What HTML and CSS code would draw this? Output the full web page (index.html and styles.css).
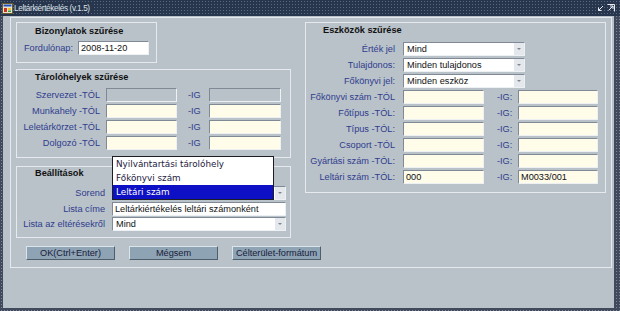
FILE: index.html
```html
<!DOCTYPE html>
<html lang="hu">
<head>
    <meta charset="UTF-8">
    <title>Leltárkiértékelés</title>
    <link rel="stylesheet" href="styles.css">
</head>
<body>
    <div class="ablak">
        <div class="cimsor">
            <svg class="ikon" width="11" height="11" viewBox="0 0 11 11">
                <rect x="0.5" y="0.5" width="10" height="10" fill="#e8e4d0" stroke="#6a5a30"/>
                <rect x="1.5" y="1.5" width="8" height="2" fill="#2050c0"/>
                <rect x="2" y="5" width="3" height="4" fill="#d03020"/>
                <rect x="6" y="5" width="3" height="2" fill="#e8c020"/>
                <rect x="6" y="7.5" width="3" height="1.5" fill="#30a040"/>
            </svg>
            <span class="cim">Leltárkiértékelés (v.1.5)</span>
            <span class="cim-gombok">
                <svg width="7" height="7" viewBox="0 0 7 7">
                    <path d="M6 1 L1.5 5.5 M1.5 2.5 V5.5 H4.5" stroke="#e8ecf2" stroke-width="1" fill="none"/>
                </svg>
                <svg width="8" height="8" viewBox="0 0 8 8">
                    <path d="M0.5 0.5 H7.5 V7.5 M1.5 6.5 L6 2 M3 2 H6 V5" stroke="#e8ecf2" stroke-width="1" fill="none"/>
                </svg>
            </span>
        </div>

        <div class="torzs">
            <div class="keret">
                <div class="csoportok">
                    <div class="bal">
                        <div class="csoport bizonylatok">
                            <div class="csoport-cim">Bizonylatok szűrése</div>
                            <div class="racs">
                                <span class="cimke">Fordulónap:</span>
                                <div class="mezo feher">2008-11-20</div>
                            </div>
                        </div>

                        <div class="csoport tarolo">
                            <div class="csoport-cim">Tárolóhelyek szűrése</div>
                            <div class="racs">
                                <span class="cimke">Szervezet -TÓL</span>
                                <div class="mezo tiltott"></div>
                                <span class="cimke ig">-IG</span>
                                <div class="mezo tiltott"></div>

                                <span class="cimke">Munkahely -TÓL</span>
                                <div class="mezo"></div>
                                <span class="cimke ig">-IG</span>
                                <div class="mezo"></div>

                                <span class="cimke">Leletárkörzet -TÓL</span>
                                <div class="mezo"></div>
                                <span class="cimke ig">-IG</span>
                                <div class="mezo"></div>

                                <span class="cimke">Dolgozó -TÓL</span>
                                <div class="mezo"></div>
                                <span class="cimke ig">-IG</span>
                                <div class="mezo"></div>
                            </div>
                        </div>

                        <div class="csoport beallitasok">
                            <div class="csoport-cim">Beállítások</div>
                            <div class="racs">
                                <span class="cimke">Sorend</span>
                                <div class="mezo valaszto">
                                    <span class="ertek"></span>
                                    <span class="nyil"></span>
                                    <!-- nyitott lista a Sorend mezo folott -->
                                    <div class="legordulo">
                                        <div class="elem">Nyilvántartási tárolóhely</div>
                                        <div class="elem">Főkönyvi szám</div>
                                        <div class="elem kivalasztott">Leltári szám</div>
                                    </div>
                                </div>

                                <span class="cimke">Lista címe</span>
                                <div class="mezo feher">Leltárkiértékelés leltári számonként</div>

                                <span class="cimke">Lista az eltérésekről</span>
                                <div class="mezo valaszto">
                                    <span class="ertek">Mind</span>
                                    <span class="nyil"></span>
                                </div>
                            </div>
                        </div>
                    </div>

                    <div class="csoport eszkozok">
                        <div class="csoport-cim">Eszközök szűrése</div>
                        <div class="racs">
                            <span class="cimke">Érték jel</span>
                            <div class="mezo valaszto">
                                <span class="ertek">Mind</span>
                                <span class="nyil"></span>
                            </div>

                            <span class="cimke">Tulajdonos:</span>
                            <div class="mezo valaszto">
                                <span class="ertek">Minden tulajdonos</span>
                                <span class="nyil"></span>
                            </div>

                            <span class="cimke">Főkönyvi jel:</span>
                            <div class="mezo valaszto">
                                <span class="ertek">Minden eszköz</span>
                                <span class="nyil"></span>
                            </div>

                            <span class="cimke">Főkönyvi szám -TÓL</span>
                            <div class="mezo"></div>
                            <span class="cimke ig">-IG:</span>
                            <div class="mezo"></div>

                            <span class="cimke">Főtípus -TÓL:</span>
                            <div class="mezo"></div>
                            <span class="cimke ig">-IG:</span>
                            <div class="mezo"></div>

                            <span class="cimke">Típus -TÓL:</span>
                            <div class="mezo"></div>
                            <span class="cimke ig">-IG:</span>
                            <div class="mezo"></div>

                            <span class="cimke">Csoport -TÓL</span>
                            <div class="mezo"></div>
                            <span class="cimke ig">-IG:</span>
                            <div class="mezo"></div>

                            <span class="cimke">Gyártási szám -TÓL:</span>
                            <div class="mezo"></div>
                            <span class="cimke ig">-IG:</span>
                            <div class="mezo"></div>

                            <span class="cimke">Leltári szám -TÓL:</span>
                            <div class="mezo">000</div>
                            <span class="cimke ig">-IG:</span>
                            <div class="mezo">M0033/001</div>
                        </div>
                    </div>
                </div>

                <div class="gombsor">
                    <button class="gomb">OK(Ctrl+Enter)</button>
                    <button class="gomb">Mégsem</button>
                    <button class="gomb">Célterület-formátum</button>
                </div>
            </div>
        </div>
    </div>
</body>
</html>
```

FILE: styles.css
```css
body {
    margin: 0;
    font-family: 'Liberation Sans', Arial, sans-serif;
    font-size: 9.2px;
    color: #111;
}
.ablak {
    width: 620px;
    height: 311px;
    display: flex;
    flex-direction: column;
    background-color: #404a5c;
    background-image: radial-gradient(circle, #7c8898 0.8px, transparent 1px);
    background-size: 3px 3px;
}

/* cimsor */
.cimsor {
    height: 16px;
    display: flex;
    align-items: center;
    background-color: #28364d;
    background-image: radial-gradient(circle, #5a6982 0.8px, transparent 1px);
    background-size: 3px 3px;
}
.ikon {
    margin-left: 2px;
    margin-right: 1px;
}
.cim {
    color: #dde2ea;
    font-size: 8.2px;
    letter-spacing: -0.35px;
    background-color: #28364d;
    padding-right: 2px;
}
.cim-gombok {
    margin-left: auto;
    margin-right: 5px;
    display: flex;
    align-items: center;
    gap: 3px;
}

/* ablak torzs */
.torzs {
    flex: 1;
    margin: 0 6px 3px 3px;
    background-color: #b9c1c9;
    padding: 1px 0 0 7px;
}
.keret {
    box-sizing: border-box;
    width: 602px;
    height: 251px;
    border: 1px solid #e6eaee;
    padding: 4px 0 0 5px;
}
.csoportok {
    display: flex;
    gap: 14px;
    align-items: flex-start;
}
.bal {
    display: flex;
    flex-direction: column;
    width: 275px;
}
.csoport {
    box-sizing: border-box;
    border: 1px solid #e6eaee;
}
.csoport-cim {
    font-weight: bold;
    color: #111;
    padding-left: 18px;
}
.racs {
    display: grid;
    align-items: center;
}
.cimke {
    color: #2f3d8e;
    text-align: right;
    white-space: nowrap;
    line-height: 14px;
}
.cimke.ig {
    text-align: left;
}

/* mezok */
.mezo {
    box-sizing: border-box;
    height: 14px;
    line-height: 12px;
    padding-left: 2px;
    border: 1px solid;
    border-color: #7f8a96 #eef1f4 #eef1f4 #7f8a96;
    background-color: #fffcea;
    white-space: nowrap;
}
.mezo.feher {
    background-color: #fff;
}
.mezo.tiltott {
    background-color: #b9c1c9;
}
.valaszto {
    position: relative;
    display: flex;
    background-color: #fff;
}
.valaszto .ertek {
    flex: 1;
    padding-left: 1px;
}
.nyil {
    width: 10px;
    background-color: #e4e8ec;
    position: relative;
}
.nyil::after {
    content: "";
    position: absolute;
    left: 3px;
    top: 5px;
    border-left: 2px solid transparent;
    border-right: 2px solid transparent;
    border-top: 2px solid #80868e;
}

/* Bizonylatok */
.bizonylatok {
    width: 141px;
    height: 41px;
}
.bizonylatok .csoport-cim {
    height: 16px;
    line-height: 16px;
}
.bizonylatok .racs {
    padding-top: 2px;
    grid-template-columns: 61px 71px;
}
.bizonylatok .cimke {
    text-align: left;
    padding-left: 7px;
}

/* Tarolohelyek */
.tarolo {
    margin-top: 6px;
    height: 89px;
}
.tarolo .csoport-cim {
    height: 14px;
    line-height: 14px;
}
.tarolo .racs {
    padding-top: 4px;
    grid-template-columns: 89px 71px 32px 72px;
    row-gap: 2px;
}
.tarolo .cimke {
    padding-right: 6px;
}
.tarolo .cimke.ig {
    padding-left: 11px;
    padding-right: 0;
}

/* Beallitasok */
.beallitasok {
    margin-top: 8px;
    height: 72px;
}
.beallitasok .csoport-cim {
    height: 12px;
    line-height: 12px;
}
.beallitasok .racs {
    padding-top: 7px;
    grid-template-columns: 95px 174px;
    row-gap: 1.5px;
}
.beallitasok .cimke {
    padding-right: 7px;
}
.legordulo {
    position: absolute;
    left: -1px;
    top: -31px;
    width: 162px;
    box-sizing: border-box;
    border: 1px solid #1c1c24;
    background-color: #fff;
    font-family: 'DejaVu Sans', Verdana, sans-serif;
    font-size: 8.8px;
    color: #1c2040;
    z-index: 2;
}
.elem {
    height: 14px;
    line-height: 14px;
    padding-left: 3px;
}
.elem.kivalasztott {
    background-color: #0d10c4;
    color: #fff;
}

/* Eszkozok */
.eszkozok {
    width: 301px;
    height: 171px;
}
.eszkozok .csoport-cim {
    height: 14px;
    line-height: 14px;
    padding-left: 17px;
}
.eszkozok .racs {
    padding-top: 5px;
    grid-template-columns: 97px 81px 34px 80px;
    row-gap: 2px;
}
.eszkozok .cimke {
    padding-right: 8px;
}
.eszkozok .cimke.ig {
    padding-left: 13px;
    padding-right: 0;
}
.eszkozok .valaszto {
    grid-column: 2 / 5;
    width: 122px;
}

/* gombok */
.gombsor {
    display: flex;
    gap: 14px;
    margin-top: 8px;
    padding-left: 10px;
}
.gomb {
    box-sizing: border-box;
    width: 89px;
    height: 14px;
    padding: 0;
    font-family: 'Liberation Sans', Arial, sans-serif;
    font-size: 9.2px;
    line-height: 12px;
    color: #17203a;
    background-color: #8ea3b4;
    border: 1px solid;
    border-color: #dce4ea #4e5e6c #4e5e6c #dce4ea;
    cursor: pointer;
}
```
